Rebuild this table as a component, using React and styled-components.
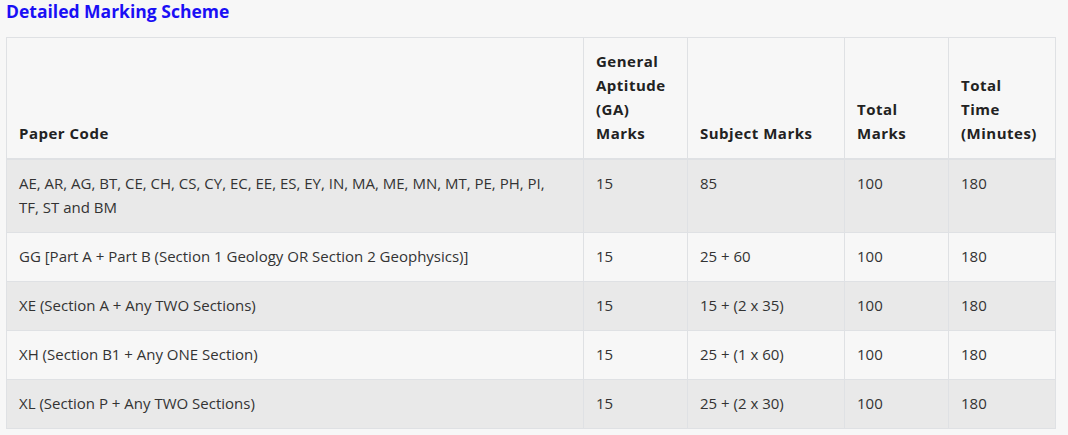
import React from "react";
import styled, { createGlobalStyle } from "styled-components";

const GlobalStyle = createGlobalStyle`
  body {
    margin: 0;
    background: #f7f7f7;
    font-family: "Open Sans", "Liberation Sans", sans-serif;
  }
`;

const rows = [
  [
    <>
      AE, AR, AG, BT, CE, CH, CS, CY, EC, EE, ES, EY, IN, MA, ME, MN, MT, PE, PH, PI,
      <br />
      TF, ST and BM
    </>,
    "15",
    "85",
    "100",
    "180",
  ],
  ["GG [Part A + Part B (Section 1 Geology OR Section 2 Geophysics)]", "15", "25 + 60", "100", "180"],
  ["XE (Section A + Any TWO Sections)", "15", "15 + (2 x 35)", "100", "180"],
  ["XH (Section B1 + Any ONE Section)", "15", "25 + (1 x 60)", "100", "180"],
  ["XL (Section P + Any TWO Sections)", "15", "25 + (2 x 30)", "100", "180"],
];

function App() {
  return (
    <>
      <GlobalStyle />
      <Page>
        <Title>Detailed Marking Scheme</Title>
        <Table>
          <colgroup>
            <col style={{ width: 577 }} />
            <col style={{ width: 104 }} />
            <col style={{ width: 157 }} />
            <col style={{ width: 104 }} />
            <col style={{ width: 107 }} />
          </colgroup>
          <thead>
            <tr>
              <Th>Paper Code</Th>
              <Th>General Aptitude (GA) Marks</Th>
              <Th>Subject Marks</Th>
              <Th>Total Marks</Th>
              <Th>Total Time (Minutes)</Th>
            </tr>
          </thead>
          <tbody>
            {rows.map((r, i) => (
              <Row key={i} $striped={i % 2 === 0}>
                {r.map((c, j) => (
                  <Td key={j}>{c}</Td>
                ))}
              </Row>
            ))}
          </tbody>
        </Table>
      </Page>
    </>
  );
}

export default App;

const Page = styled.div`
  padding: 0 13px 0 6px;
`;

const Title = styled.h3`
  margin: 0;
  height: 37px;
  font-size: 17.5px;
  line-height: 22px;
  font-weight: 700;
  color: #1a0ff5;
`;

const Table = styled.table`
  width: 1049px;
  border-collapse: collapse;
  table-layout: fixed;
  border: 1px solid #dfe1e4;
  font-size: 15px;
  line-height: 24px;
`;

const Th = styled.th`
  text-align: left;
  vertical-align: bottom;
  padding: 11px 12px 13px;
  font-weight: 700;
  letter-spacing: 0.5px;
  color: #222;
  background: #f7f7f7;
  border: 1px solid #dfe1e4;
  border-bottom: 2px solid #dfe1e4;
`;

const Row = styled.tr`
  background: ${(p) => (p.$striped ? "#e9e9e9" : "#f7f7f7")};
`;

const Td = styled.td`
  vertical-align: top;
  padding: 11px 12px 13px;
  color: #333;
  border: 1px solid #dfe1e4;
`;
